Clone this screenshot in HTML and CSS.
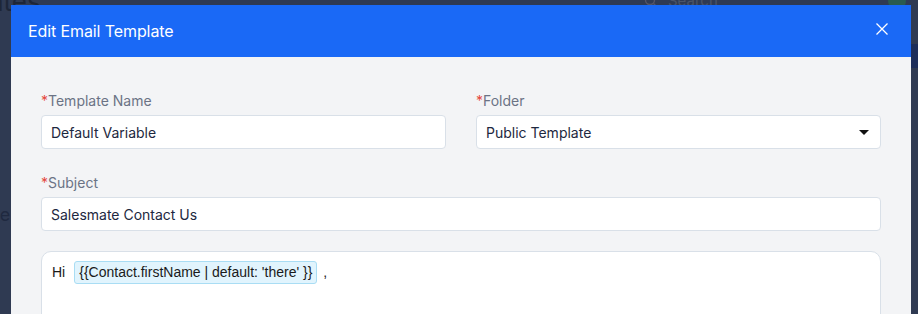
FILE: index.html
```html
<!DOCTYPE html>
<html>
<head>
<meta charset="utf-8">
<link rel="stylesheet" href="styles.css">
</head>
<body>
<div class="page">
  <div class="page-title">Templates</div>
  <div class="page-search">
    <svg width="14" height="14" viewBox="0 0 14 14"><circle cx="6" cy="6" r="4.5" fill="none" stroke="#556" stroke-width="1.4"/><path d="M9.5 9.5 L13 13" stroke="#556" stroke-width="1.4"/></svg>
    <span>Search</span>
  </div>
  <div class="page-avatar"></div>
  <div class="page-side">te</div>
  <div class="page-bluebar"></div>
</div>
<div class="modal">
  <div class="modal-header">
    <span class="modal-title">Edit Email Template</span>
    <svg class="close" width="12" height="12" viewBox="0 0 12 12"><path d="M0.5 0.5 L11.5 11.5 M11.5 0.5 L0.5 11.5" stroke="#fff" stroke-width="1.3"/></svg>
  </div>
  <div class="modal-body">
    <div class="row two">
      <div class="field">
        <label class="label"><span class="req">*</span>Template Name</label>
        <div class="input">Default Variable</div>
      </div>
      <div class="field">
        <label class="label"><span class="req">*</span>Folder</label>
        <div class="input select">Public Template<span class="caret"></span></div>
      </div>
    </div>
    <div class="row">
      <div class="field">
        <label class="label"><span class="req">*</span>Subject</label>
        <div class="input">Salesmate Contact Us</div>
      </div>
    </div>
    <div class="editor">
      <span class="hi">Hi</span><span class="chip">{{Contact.firstName | default: 'there' }}</span><span class="comma">,</span>
    </div>
  </div>
</div>
</body>
</html>
```
FILE: styles.css
```css
* { box-sizing: border-box; }
html, body { margin: 0; padding: 0; }
body {
  width: 918px;
  height: 314px;
  overflow: hidden;
  background: #2f3a52;
  font-family: Inter, "Noto Sans", sans-serif;
  position: relative;
}
.page { position: absolute; inset: 0; overflow: hidden; }
.page-title {
  position: absolute;
  left: -86px;
  top: -14px;
  font-size: 26px;
  color: #1d2638;
}
.page-search {
  position: absolute;
  left: 644px;
  top: -9px;
  display: flex;
  align-items: center;
  gap: 10px;
  color: #4a5469;
  font-size: 15px;
}
.page-avatar {
  position: absolute;
  left: 888px;
  top: -8px;
  width: 18px;
  height: 18px;
  border-radius: 50%;
  background: #2a5b4e;
}
.page-side {
  position: absolute;
  left: -6px;
  top: 204px;
  font-size: 18px;
  color: #1f2940;
}
.page-bluebar {
  position: absolute;
  left: 911px;
  top: 44px;
  width: 7px;
  height: 24px;
  background: #1d2e5a;
}
.modal {
  position: absolute;
  left: 11px;
  top: 5px;
  width: 900px;
  height: 309px;
  overflow: hidden;
  background: #f3f4f6;
}
.modal-header {
  height: 52px;
  background: #1a69f6;
  display: flex;
  align-items: center;
  justify-content: space-between;
  padding: 0 23px 0 17px;
}
.modal-title {
  color: #fff;
  font-size: 16px;
  font-weight: 400;
  letter-spacing: -0.1px;
}
.close { display: block; margin-top: -4px; }
.modal-body {
  padding: 34px 30px 0 30px;
}
.row { margin-bottom: 24px; }
.row.two {
  display: grid;
  grid-template-columns: 1fr 1fr;
  gap: 30px;
}
.field { display: flex; flex-direction: column; }
.label {
  font-size: 14px;
  line-height: 20px;
  color: #6b7385;
  margin-bottom: 4px;
}
.req { color: #e5483d; }
.input {
  height: 34px;
  background: #fff;
  border: 1px solid #d9e0e8;
  border-radius: 4px;
  padding: 0 9px;
  display: flex;
  align-items: center;
  font-size: 14px;
  color: #1d2840;
}
.select { justify-content: space-between; padding-right: 11px; }
.caret {
  width: 0;
  height: 0;
  border-left: 5px solid transparent;
  border-right: 5px solid transparent;
  border-top: 5px solid #111;
}
.editor {
  margin-top: -4px;
  height: 120px;
  background: #fff;
  border: 1px solid #d9e0e8;
  border-radius: 10px;
  padding: 9px 10px;
  font-family: "Liberation Sans", Arial, sans-serif;
  font-size: 14px;
  color: #1a1a1a;
  display: flex;
  align-items: flex-start;
}
.hi { line-height: 22px; margin-right: 9px; }
.chip {
  background: #e1f4fd;
  border: 1px solid #a9ddf4;
  border-radius: 3px;
  padding: 0 4px;
  line-height: 21px;
}
.comma { line-height: 22px; margin-left: 6px; }
```
